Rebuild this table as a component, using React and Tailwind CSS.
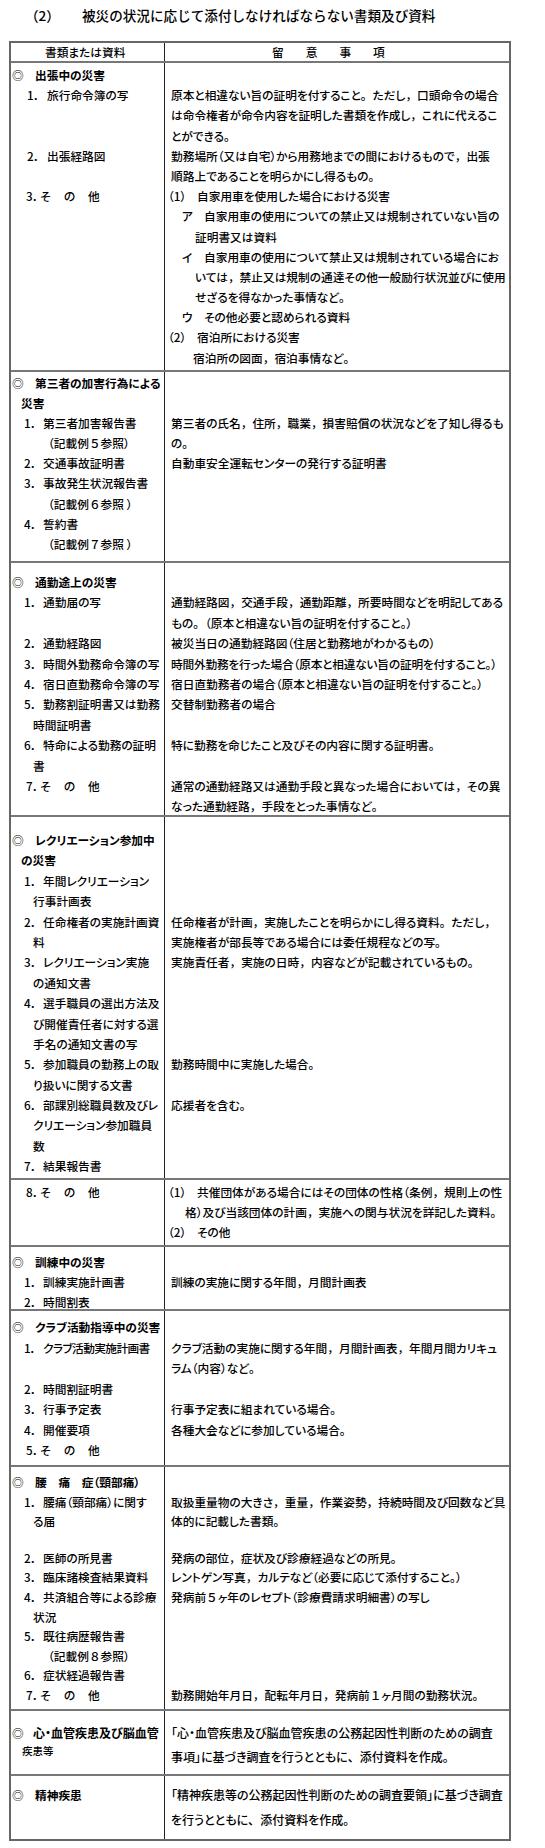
const NORMAL_CHARS = /([，。、０-９])/;

// 句読点と全角数字は全角のまま、それ以外はプロポーショナル
function fmt(s) {
  return s.split(NORMAL_CHARS).map((p, i) =>
    i % 2 ? (
      <span key={i} className="[font-feature-settings:normal]">
        {p}
      </span>
    ) : (
      p
    )
  );
}

const NB = 'pl-[13px] w-[32px]';
const N1 = 'pl-[16px] w-[36px]';

const H = (t, extra = {}) => ({ k: 'h', t, ...extra });
const N = (n, t, nc = NB, c) => ({ k: 'n', n, t, nc, c });
const S = (n) => ({ k: 's', n });
const T = (t, c, h) => ({ k: 't', t, c, h });
const G = (h) => ({ k: 'g', h });
const M = (m, t) => ({ m, t });
const R = (t, c) => ({ t, c });

const sections = [
  {
    h: 'h-[309px]',
    pt: 'pt-[2px]',
    lh: 'h-[20.2px] leading-[20.2px]',
    L: [
      H('出張中の災害'),
      N('1．', '旅行命令簿の写', N1),
      null,
      null,
      N('2．', '出張経路図', N1),
      null,
      S('3．'),
    ],
    R: [
      null,
      '原本と相違ない旨の証明を付すること。ただし，口頭命令の場合',
      'は命令権者が命令内容を証明した書類を作成し，これに代えるこ',
      'とができる。',
      '勤務場所（又は自宅）から用務地までの間におけるもので，出張',
      '順路上であることを明らかにし得るもの。',
      M('（1）', '自家用車を使用した場合における災害'),
      M('ア', '自家用車の使用についての禁止又は規制されていない旨の'),
      R('証明書又は資料', 'pl-[30px]'),
      M('イ', '自家用車の使用について禁止又は規制されている場合にお'),
      R('いては，禁止又は規制の通達その他一般励行状況並びに使用', 'pl-[30px]'),
      R('せざるを得なかった事情など。', 'pl-[30px]'),
      M('ウ', 'その他必要と認められる資料'),
      M('（2）', '宿泊所における災害'),
      R('宿泊所の図面，宿泊事情など。', 'pl-[28px]'),
    ],
  },
  {
    h: 'h-[191px]',
    pt: 'pt-[1px]',
    lh: 'h-[20.1px] leading-[20.1px]',
    L: [
      H('第三者の加害行為による'),
      T('災害', 'pl-[10px] font-bold'),
      N('1．', '第三者加害報告書'),
      T('（記載例５参照）', 'pl-[37px]'),
      N('2．', '交通事故証明書'),
      N('3．', '事故発生状況報告書'),
      T('（記載例６参照 ）', 'pl-[37px]'),
      N('4．', '誓約書'),
      T('（記載例７参照 ）', 'pl-[37px]'),
    ],
    R: [
      null,
      null,
      '第三者の氏名，住所，職業，損害賠償の状況などを了知し得るも',
      'の。',
      '自動車安全運転センターの発行する証明書',
    ],
  },
  {
    h: 'h-[254px]',
    pt: 'pt-[9px]',
    lh: 'h-[20.4px] leading-[20.4px]',
    L: [
      H('通勤途上の災害'),
      N('1．', '通勤届の写'),
      null,
      N('2．', '通勤経路図'),
      N('3．', '時間外勤務命令簿の写'),
      N('4．', '宿日直勤務命令簿の写'),
      N('5．', '勤務割証明書又は勤務'),
      T('時間証明書', 'pl-[22px]'),
      N('6．', '特命による勤務の証明'),
      T('書', 'pl-[22px]'),
      S('7．'),
    ],
    R: [
      null,
      '通勤経路図，交通手段，通勤距離，所要時間などを明記してある',
      'もの。（原本と相違ない旨の証明を付すること。）',
      '被災当日の通勤経路図（住居と勤務地がわかるもの）',
      R('時間外勤務を行った場合（原本と相違ない旨の証明を付すること。）', 'pl-[6px] tracking-[-0.2px]'),
      '宿日直勤務者の場合（原本と相違ない旨の証明を付すること。）',
      '交替制勤務者の場合',
      null,
      '特に勤務を命じたこと及びその内容に関する証明書。',
      null,
      '通常の通勤経路又は通勤手段と異なった場合においては，その異',
      'なった通勤経路，手段をとった事情など。',
    ],
  },
  {
    h: 'h-[363px]',
    pt: 'pt-[13px]',
    lh: 'h-[20.4px] leading-[20.4px]',
    L: [
      H('レクリエーション参加中'),
      T('の災害', 'pl-[10px] font-bold'),
      N('1．', '年間レクリエーション'),
      T('行事計画表', 'pl-[22px]'),
      N('2．', '任命権者の実施計画資'),
      T('料', 'pl-[22px]'),
      N('3．', 'レクリエーション実施'),
      T('の通知文書', 'pl-[22px]'),
      N('4．', '選手職員の選出方法及'),
      T('び開催責任者に対する選', 'pl-[22px]'),
      T('手名の通知文書の写', 'pl-[22px]'),
      N('5．', '参加職員の勤務上の取'),
      T('り扱いに関する文書', 'pl-[22px]'),
      N('6．', '部課別総職員数及びレ'),
      T('クリエーション参加職員', 'pl-[22px]'),
      T('数', 'pl-[22px]'),
      N('7．', '結果報告書'),
    ],
    R: [
      null,
      null,
      null,
      null,
      '任命権者が計画，実施したことを明らかにし得る資料。ただし，',
      '実施権者が部長等である場合には委任規程などの写。',
      '実施責任者，実施の日時，内容などが記載されているもの。',
      null,
      null,
      null,
      null,
      '勤務時間中に実施した場合。',
      null,
      '応援者を含む。',
    ],
  },
  {
    h: 'h-[67px]',
    pt: 'pt-[2px]',
    lh: 'h-[20px] leading-[20px]',
    L: [S('8．')],
    R: [
      M('（1）', '共催団体がある場合にはその団体の性格（条例，規則上の性'),
      R('格）及び当該団体の計画，実施への関与状況を詳記した資料。', 'pl-[20px]'),
      M('（2）', 'その他'),
    ],
  },
  {
    h: 'h-[64px]',
    pt: 'pt-[5px]',
    lh: 'h-[20px] leading-[20px]',
    L: [H('訓練中の災害'), N('1．', '訓練実施計画書'), N('2．', '時間割表')],
    R: [null, '訓練の実施に関する年間，月間計画表'],
  },
  {
    h: 'h-[156px]',
    pt: 'pt-[6px]',
    lh: 'h-[20.5px] leading-[20.5px]',
    L: [
      H('クラブ活動指導中の災害'),
      N('1．', 'クラブ活動実施計画書', NB, 'tracking-[-0.6px]'),
      null,
      N('2．', '時間割証明書'),
      N('3．', '行事予定表'),
      N('4．', '開催要項'),
      S('5．'),
    ],
    R: [
      null,
      'クラブ活動の実施に関する年間，月間計画表，年間月間カリキュ',
      'ラム（内容）など。',
      null,
      '行事予定表に組まれている場合。',
      '各種大会などに参加している場合。',
    ],
  },
  {
    h: 'h-[244px]',
    pt: 'pt-[5px]',
    lh: 'h-[19.6px] leading-[19.6px]',
    L: [
      H('腰　痛　症（頸部痛）'),
      N('1．', '腰痛（頸部痛）に関す'),
      T('る届', 'pl-[22px]'),
      G('h-[17px]'),
      N('2．', '医師の所見書'),
      N('3．', '臨床諸検査結果資料'),
      N('4．', '共済組合等による診療'),
      T('状況', 'pl-[22px]'),
      N('5．', '既往病歴報告書'),
      T('（記載例８参照）', 'pl-[37px]'),
      N('6．', '症状経過報告書'),
      S('7．'),
    ],
    R: [
      null,
      '取扱重量物の大きさ，重量，作業姿勢，持続時間及び回数など具',
      '体的に記載した書類。',
      G('h-[17px]'),
      '発病の部位，症状及び診療経過などの所見。',
      'レントゲン写真，カルテなど（必要に応じて添付すること。）',
      '発病前５ヶ年のレセプト（診療費請求明細書）の写し',
      null,
      null,
      null,
      null,
      '勤務開始年月日，配転年月日，発病前１ヶ月間の勤務状況。',
    ],
  },
  {
    h: 'h-[65px]',
    pt: 'pt-[10px]',
    lh: 'h-[24px] leading-[24px]',
    L: [
      H('心・血管疾患及び脳血管', { mc: 'pl-[1px] w-[22px]', tc: 'text-[12px]' }),
      T('疾患等', 'pl-[11px] text-[10.5px]', 'h-[12px] leading-[12px]'),
    ],
    R: [
      R('「心・血管疾患及び脳血管疾患の公務起因性判断のための調査', 'pl-[6px] text-[12px]'),
      R('事項」に基づき調査を行うとともに、添付資料を作成。', 'pl-[6px] text-[12px]'),
    ],
  },
  {
    h: 'h-[63px]',
    pt: 'pt-[6px]',
    lh: 'h-[25px] leading-[25px]',
    L: [H('精神疾患')],
    R: [
      R('「精神疾患等の公務起因性判断のための調査要領」に基づき調査', 'pl-[6px] text-[12px]'),
      R('を行うとともに、添付資料を作成。', 'pl-[6px] text-[12px]'),
    ],
  },
];

function LeftLine({ it, lh }) {
  if (!it) return <div className={lh} />;
  if (it.k === 'g') return <div className={it.h} />;
  const cls = `flex whitespace-nowrap ${it.h || lh} ${it.c || ''}`;
  if (it.k === 'h')
    return (
      <div className={cls}>
        <span className={`shrink-0 ${it.mc || 'pl-[1px] w-[24px]'}`}>◎</span>
        <span className={`font-bold ${it.tc || ''}`}>{fmt(it.t)}</span>
      </div>
    );
  if (it.k === 'n')
    return (
      <div className={cls}>
        <span className={`shrink-0 ${it.nc}`}>{it.n}</span>
        <span>{fmt(it.t)}</span>
      </div>
    );
  if (it.k === 's')
    return (
      <div className={cls}>
        <span className="shrink-0 pl-[15px] w-[29px]">{it.n}</span>
        <span className="w-[24px] shrink-0">そ</span>
        <span className="w-[24px] shrink-0">の</span>
        <span>他</span>
      </div>
    );
  return <div className={cls}>{fmt(it.t)}</div>;
}

function RightLine({ it, lh }) {
  if (!it) return <div className={lh} />;
  if (typeof it === 'string')
    return <div className={`whitespace-nowrap pl-[6px] ${lh}`}>{fmt(it)}</div>;
  if (it.k === 'g') return <div className={it.h} />;
  if (it.m) {
    const mc = it.m.startsWith('（') ? 'pl-[3px] w-[32px]' : 'pl-[17px] w-[39px]';
    return (
      <div className={`flex whitespace-nowrap ${lh}`}>
        <span className={`shrink-0 ${mc}`}>{it.m}</span>
        <span>{fmt(it.t)}</span>
      </div>
    );
  }
  return <div className={`whitespace-nowrap ${lh} ${it.c}`}>{fmt(it.t)}</div>;
}

function Row({ s, last }) {
  return (
    <div className={`flex ${s.h} ${last ? '' : 'border-b-2 border-[#777]'}`}>
      <div className={`w-[154px] shrink-0 border-r border-[#222] ${s.pt}`}>
        {s.L.map((it, i) => (
          <LeftLine key={i} it={it} lh={s.lh} />
        ))}
      </div>
      <div className={`flex-1 ${s.pt}`}>
        {s.R.map((it, i) => (
          <RightLine key={i} it={it} lh={s.lh} />
        ))}
      </div>
    </div>
  );
}

export default function App() {
  return (
    <div className="w-[545px] min-h-[1848px] bg-white text-black font-medium text-[11.7px] font-['Noto_Sans_CJK_JP',sans-serif] [font-feature-settings:'palt']">
      <div className="flex h-[41px] pt-[5px] text-[13.6px] leading-[20px] [font-feature-settings:normal]">
        <span className="w-[82px] shrink-0 pl-[25px]">（2）</span>
        <span>被災の状況に応じて添付しなければならない書類及び資料</span>
      </div>

      <div className="ml-[9px] w-[502px] border-2 border-[#666]">
        <div className="flex h-[20px] border-b-2 border-[#777] leading-[18px]">
          <div className="w-[154px] shrink-0 border-r border-[#222] pl-[34px]">書類または資料</div>
          <div className="flex flex-1 gap-[22px] pl-[107px]">
            <span>留</span>
            <span>意</span>
            <span>事</span>
            <span>項</span>
          </div>
        </div>
        {sections.map((s, i) => (
          <Row key={i} s={s} last={i === sections.length - 1} />
        ))}
      </div>
    </div>
  );
}
